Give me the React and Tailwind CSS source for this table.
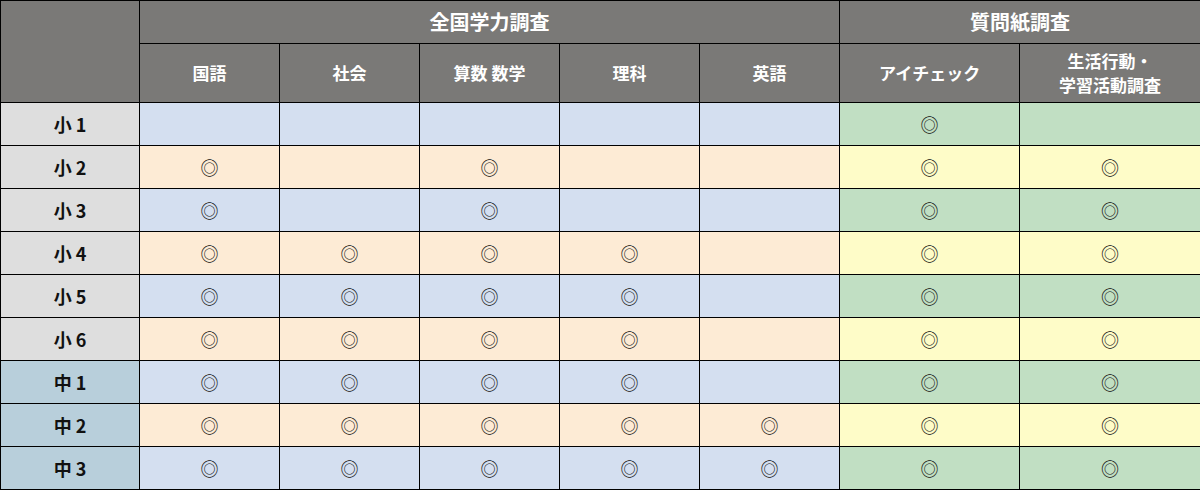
const subjects = ["国語", "社会", "算数 数学", "理科", "英語"];

const rows = [
  { label: "小 1", grade: "e", marks: [0, 0, 0, 0, 0, 1, 0] },
  { label: "小 2", grade: "e", marks: [1, 0, 1, 0, 0, 1, 1] },
  { label: "小 3", grade: "e", marks: [1, 0, 1, 0, 0, 1, 1] },
  { label: "小 4", grade: "e", marks: [1, 1, 1, 1, 0, 1, 1] },
  { label: "小 5", grade: "e", marks: [1, 1, 1, 1, 0, 1, 1] },
  { label: "小 6", grade: "e", marks: [1, 1, 1, 1, 0, 1, 1] },
  { label: "中 1", grade: "j", marks: [1, 1, 1, 1, 0, 1, 1] },
  { label: "中 2", grade: "j", marks: [1, 1, 1, 1, 1, 1, 1] },
  { label: "中 3", grade: "j", marks: [1, 1, 1, 1, 1, 1, 1] },
];

const font = { fontFamily: '"Noto Sans CJK JP", "Noto Sans", sans-serif' };

export default function App() {
  return (
    <div className="w-[1200px] h-[490px] bg-white" style={font}>
      <table className="w-[1200px] table-fixed border-collapse border border-black text-center">
        <colgroup>
          <col className="w-[139px]" />
          <col className="w-[140px]" />
          <col className="w-[140px]" />
          <col className="w-[140px]" />
          <col className="w-[140px]" />
          <col className="w-[140px]" />
          <col className="w-[180px]" />
          <col className="w-[181px]" />
        </colgroup>
        <thead className="bg-[#7a7977] text-white font-bold">
          <tr className="h-[43px]">
            <th rowSpan={2} className="border border-black"></th>
            <th colSpan={5} className="border border-black text-[20px] leading-[24px]">全国学力調査</th>
            <th colSpan={2} className="border border-black text-[20px] leading-[24px]">質問紙調査</th>
          </tr>
          <tr className="h-[59px]">
            {subjects.map((s) => (
              <th key={s} className="border border-black text-[17px] leading-[22px]">{s}</th>
            ))}
            <th className="border border-black text-[17px] leading-[22px]">アイチェック</th>
            <th className="border border-black text-[17px] leading-[24px]">
              <div>生活行動・</div>
              <div>学習活動調査</div>
            </th>
          </tr>
        </thead>
        <tbody>
          {rows.map((r, i) => {
            const even = i % 2 === 0;
            const subj = even ? "bg-[#d4dff0]" : "bg-[#fdebd5]";
            const q = even ? "bg-[#c1dfc3]" : "bg-[#fefcc8]";
            return (
              <tr key={r.label} className="h-[43px]">
                <td
                  className={
                    "border border-black font-bold text-[18px] leading-[22px] text-[#111] " +
                    (r.grade === "e" ? "bg-[#dedede]" : "bg-[#b8cfdb]")
                  }
                >
                  {r.label}
                </td>
                {r.marks.map((m, j) => (
                  <td
                    key={j}
                    className={"border border-black text-[18px] leading-[22px] text-[#111] " + (j < 5 ? subj : q)}
                  >
                    {m ? "◎" : ""}
                  </td>
                ))}
              </tr>
            );
          })}
        </tbody>
      </table>
    </div>
  );
}
